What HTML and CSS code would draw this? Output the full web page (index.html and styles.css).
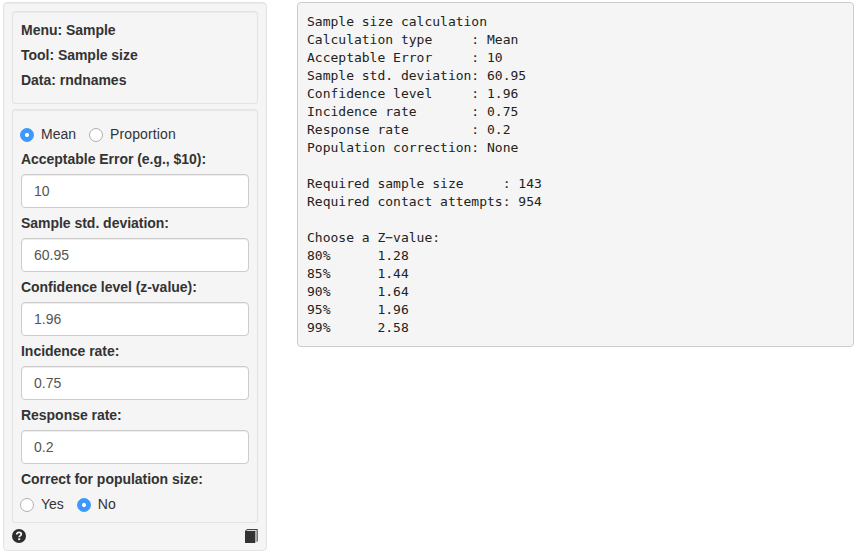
FILE: index.html
```html
<!DOCTYPE html>
<html lang="en">
<head>
<meta charset="utf-8">
<title>Sample size</title>
<link rel="stylesheet" href="styles.css">
</head>
<body>
<div class="layout">
  <aside class="sidebar">
    <section class="well">
      <div class="label">Menu: Sample</div>
      <div class="label">Tool: Sample size</div>
      <div class="label">Data: rndnames</div>
    </section>
    <form class="well form">
      <div class="radios">
        <label class="radio"><input type="radio" name="type" checked><span>Mean</span></label>
        <label class="radio"><input type="radio" name="type"><span class="wide">Proportion</span></label>
      </div>
      <label class="label" for="err">Acceptable Error (e.g., $10):</label>
      <input class="field" id="err" type="text" value="10">
      <label class="label" for="sd">Sample std. deviation:</label>
      <input class="field" id="sd" type="text" value="60.95">
      <label class="label" for="z">Confidence level (z-value):</label>
      <input class="field" id="z" type="text" value="1.96">
      <label class="label" for="inc">Incidence rate:</label>
      <input class="field" id="inc" type="text" value="0.75">
      <label class="label" for="resp">Response rate:</label>
      <input class="field" id="resp" type="text" value="0.2">
      <div class="label">Correct for population size:</div>
      <div class="radios last">
        <label class="radio"><input type="radio" name="corr"><span>Yes</span></label>
        <label class="radio"><input type="radio" name="corr" checked><span>No</span></label>
      </div>
    </form>
    <footer class="tools">
      <svg width="14" height="14" viewBox="0 0 14 14"><circle cx="7" cy="7" r="7" fill="#2d2d2d"/><path d="M4.8 5.4C4.8 4 5.7 3.3 7 3.3S9.3 4 9.3 5.2C9.3 6.6 7.2 6.7 7.2 8.3" fill="none" stroke="#f5f5f5" stroke-width="1.8"/><path d="M6.2 9.3h2v1.8h-2z" fill="#f5f5f5"/></svg>
      <svg width="13" height="14" viewBox="0 0 13 14"><path d="M0 2h10v12H0z" fill="#333"/><path d="M0 2L2 0h11v1H2.6L1.6 2z" fill="#444"/><path d="M2.2 1H12l-1 1H1.4z" fill="#ddd"/><path d="M10 2l2-1v11.4L10 14z" fill="#aaa"/><path d="M12 0h1v12l-1 1z" fill="#777"/></svg>
    </footer>
  </aside>
  <pre class="output">Sample size calculation
Calculation type     : Mean
Acceptable Error     : 10
Sample std. deviation: 60.95
Confidence level     : 1.96
Incidence rate       : 0.75
Response rate        : 0.2
Population correction: None

Required sample size     : 143
Required contact attempts: 954

Choose a Z−value:
80%      1.28
85%      1.44
90%      1.64
95%      1.96
99%      2.58</pre>
</div>
</body>
</html>
```
FILE: styles.css
```css
* { box-sizing: border-box; }
body {
  margin: 0;
  background: #fff;
  color: #333;
  font: 14px/20px "Liberation Sans", Arial, sans-serif;
}
.layout {
  display: flex;
  align-items: flex-start;
  gap: 30px;
  padding: 2px 3px;
}
.sidebar {
  width: 264px;
  height: 549px;
  padding: 8px;
  background: #f5f5f5;
  border: 1px solid #e3e3e3;
  border-radius: 4px;
  box-shadow: inset 0 1px 1px rgba(0, 0, 0, .05);
}
.well {
  width: 246px;
  margin: 0 0 5px;
  padding: 8px;
  border: 1px solid #e3e3e3;
  border-radius: 3px;
  box-shadow: inset 0 1px 1px rgba(0, 0, 0, .05);
}
.form { padding-top: 14px; }
.label {
  display: block;
  height: 20px;
  margin-bottom: 5px;
  font-weight: bold;
  letter-spacing: -0.03px;
  white-space: nowrap;
}
.field {
  display: block;
  width: 228px;
  height: 34px;
  margin: 0 0 5px;
  padding: 6px 12px;
  border: 1px solid #ccc;
  border-radius: 4px;
  background: #fff;
  box-shadow: inset 0 1px 1px rgba(0, 0, 0, .075);
  color: #555;
  font: inherit;
}
.radios {
  display: flex;
  gap: 13px;
  height: 20px;
  margin: 0 0 5px -1px;
}
.last { margin-bottom: 0; }
.radio {
  display: flex;
  align-items: center;
  gap: 7px;
}
.radio .wide { letter-spacing: 0.12px; }
.radio input {
  appearance: none;
  width: 14px;
  height: 14px;
  margin: 1px 0 0;
  border: 1px solid #b0b0b0;
  border-radius: 50%;
  background: #fff;
}
.radio input:checked {
  border-color: #3b99fc;
  background: radial-gradient(circle, #fff 1.6px, #3b99fc 2.4px);
}
.tools {
  display: flex;
  justify-content: space-between;
  width: 246px;
  padding-top: 1px;
}
.output {
  width: 557px;
  margin: 0;
  padding: 9.5px 9px;
  background: #f5f5f5;
  border: 1px solid #ccc;
  border-radius: 4px;
  color: #222;
  font: 13px/18px "DejaVu Sans Mono", monospace;
}
```
